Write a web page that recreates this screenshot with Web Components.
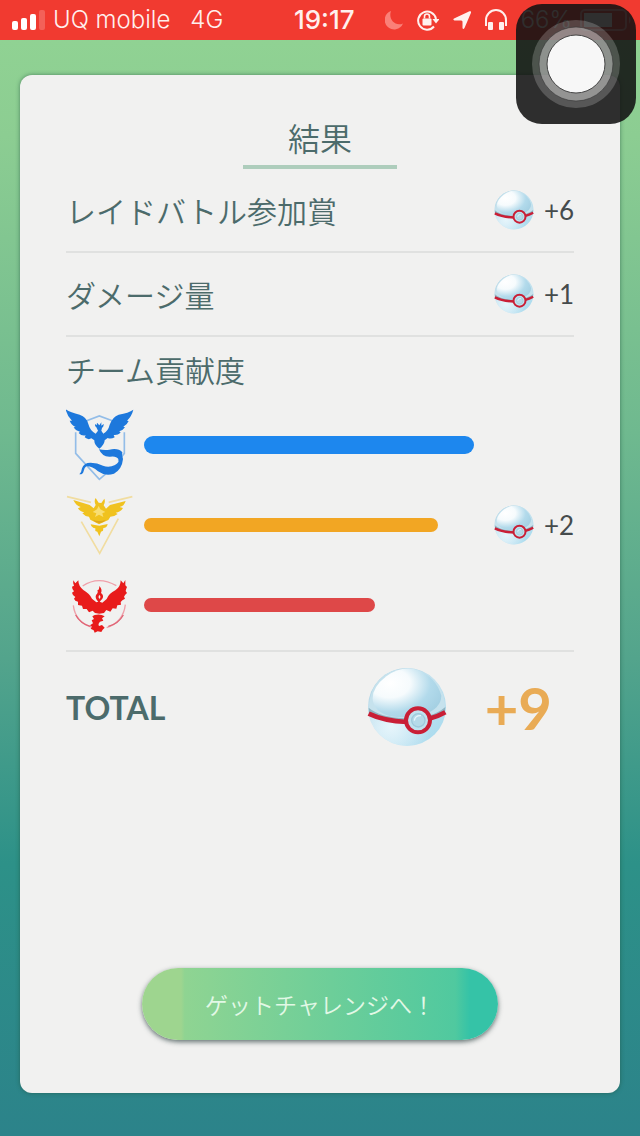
<!DOCTYPE html>
<html lang="ja">
<head>
<meta charset="utf-8">
<meta name="viewport" content="width=device-width, initial-scale=1">
<title>結果</title>
<style>
    body {
        margin: 0;
        font-family: Lato, "Noto Sans CJK JP", sans-serif;
        color: #4c6b6b;
    }
</style>
</head>
<body>
<raid-app></raid-app>

<template id="status-bar">
    <style>
        :host {
            display: flex;
            align-items: center;
            box-sizing: border-box;
            height: 40px;
            padding: 0 8px 0 12px;
            background: #f13a30;
            color: #fff0ee;
            font: 300 24px/40px Inter, "Liberation Sans", sans-serif;
        }
        svg { display: block; flex: none; }
        .carrier { margin-left: 8px; }
        .network { margin-left: 20px; }
        .time { margin-left: auto; font-size: 26px; font-weight: 500; }
        .icons { display: flex; align-items: center; gap: 14px; margin-left: 30px; }
        .power { display: flex; align-items: center; gap: 8px; }
    </style>
    <svg width="33" height="20" viewBox="0 0 33 20" fill="#fff">
        <rect y="11" width="6" height="9" rx="2"/>
        <rect x="9" y="8" width="6" height="12" rx="2"/>
        <rect x="18" y="4" width="6" height="16" rx="2"/>
        <rect x="27" width="6" height="20" rx="2" opacity=".2"/>
    </svg>
    <span class="carrier">UQ mobile</span>
    <span class="network">4G</span>
    <span class="time">19:17</span>
    <div class="icons">
        <svg width="18" height="20" viewBox="0 0 18 20"><path d="M6 1A9.500 9.500 0 1 0 18 13.500C10 17 3 9 6 1Z" fill="#fa8078"/></svg>
        <svg width="22" height="22" viewBox="0 0 22 22">
            <path d="M17 17.500A9 9 0 1 1 19 10" fill="none" stroke="#fff0ee" stroke-width="2"/>
            <path d="M15.500 10H22.500L19 14.500Z" fill="#fff0ee"/>
            <rect x="5.500" y="9.500" width="9" height="7" rx="1" fill="#fff0ee"/>
            <path d="M7.500 9.500V7.500A2.500 2.500 0 0 1 12.500 7.500V9.500" fill="none" stroke="#fff0ee" stroke-width="1.600"/>
        </svg>
        <svg width="18" height="20" viewBox="0 0 18 20"><path d="M16.500 1.200Q18.500.8 18 2.800L11.500 18Q10.200 19.800 9.500 18V11.500Q9 10.500 8 10.500H1.500Q-.5 9.800 1 8.500Z" fill="#fff0ee"/></svg>
        <svg width="22" height="22" viewBox="0 0 22 22" fill="#fff0ee">
            <path d="M1 17V11A10 10 0 0 1 21 11V17" fill="none" stroke="#fff0ee" stroke-width="2"/>
            <rect x="3" y="13" width="5" height="8" rx="1"/>
            <rect x="14" y="13" width="5" height="8" rx="1"/>
        </svg>
        <div class="power">
            <span>66%</span>
            <svg width="52" height="22" viewBox="0 0 52 22">
                <rect x="1" y="1" width="45" height="20" rx="4" fill="none" stroke="#fff" stroke-width="2" opacity=".5"/>
                <rect x="4" y="4" width="28" height="14" fill="#fff"/>
                <path d="M49 7Q52 11 49 15Z" fill="#fff" opacity=".5"/>
            </svg>
        </div>
    </div>
</template>

<template id="premier-ball">
    <style>
        :host { display: block; width: 40px; flex: none; }
        svg { display: block; width: 100%; }
    </style>
    <svg viewBox="0 0 240 240">
        <defs>
            <linearGradient id="base" x1="0" y1="0" x2="1" y2="1">
                <stop offset="0" stop-color="#a9cfe0"/>
                <stop offset=".5" stop-color="#c3e3f1"/>
                <stop offset="1" stop-color="#a4d9ed"/>
            </linearGradient>
            <radialGradient id="dome" cx=".25" cy=".3" r=".85">
                <stop offset="0" stop-color="#fff"/>
                <stop offset=".35" stop-color="#f6fbfd"/>
                <stop offset=".7" stop-color="#b2daeb"/>
                <stop offset="1" stop-color="#a3cfe2"/>
            </radialGradient>
            <radialGradient id="glow" cx=".3" cy=".75" r=".5">
                <stop offset="0" stop-color="#e6f5fb"/>
                <stop offset="1" stop-color="#e6f5fb" stop-opacity="0"/>
            </radialGradient>
        </defs>
        <circle cx="120" cy="120" r="117" fill="url(#base)"/>
        <circle cx="120" cy="120" r="117" fill="url(#glow)"/>
        <path d="M6 132Q50 160 114 162Q190 162 234 134Q238 64 184 24Q120-16 56 22Q4 58 6 132Z" fill="#c6e2ed"/>
        <path d="M5 122Q40 152 118 154Q196 154 235 120L233 142Q190 164 118 164Q46 160 6 140Z" fill="#8fb4c2"/>
        <path d="M17 96Q20 134 70 148Q120 156 172 142Q222 124 223 86Q208 30 150 8Q100-4 58 28Q16 60 17 96Z" fill="url(#dome)"/>
        <path d="M5 140Q50 162 120 165Q190 162 235 136" fill="none" stroke="#c91f36" stroke-width="14"/>
        <circle cx="153" cy="160" r="36" fill="#bfe3ef" stroke="#c91f36" stroke-width="12"/>
        <circle cx="154" cy="160" r="20" fill="#b5dbe9" stroke="#9fcadb" stroke-width="4"/>
        <path d="M142 161Q144 145 162 146" fill="none" stroke="#e7f7fc" stroke-width="4"/>
    </svg>
</template>

<template id="result-row">
    <style>
        :host {
            display: flex;
            align-items: center;
            justify-content: space-between;
            box-sizing: border-box;
            height: 84px;
            border-bottom: 2px solid #e0e1e0;
            font-size: 30px;
        }
    </style>
    <slot></slot>
    <slot name="reward"></slot>
</template>

<template id="ball-reward">
    <style>
        :host {
            display: flex;
            align-items: center;
            gap: 10px;
            width: 80px;
            color: #454b4c;
            font-size: 26px;
        }
        :host([large]) {
            gap: 38px;
            width: auto;
            padding-right: 22px;
            color: #e9ab55;
            font-size: 58px;
            font-weight: 700;
        }
        :host([large]) premier-ball { width: 80px; }
    </style>
    <premier-ball></premier-ball>
    <span><slot></slot></span>
</template>

<template id="team-bar">
    <style>
        :host {
            display: grid;
            grid-template-columns: 68px 1fr 80px;
            column-gap: 10px;
            align-items: center;
            height: 80px;
        }
        svg { display: none; width: 68px; height: 72px; }
        :host([team="mystic"]) .mystic,
        :host([team="instinct"]) .instinct,
        :host([team="valor"]) .valor { display: block; }
        .track { margin-right: 10px; }
        .fill {
            width: var(--score);
            height: 14px;
            border-radius: 9px;
            background: #f2a623;
        }
        :host([team="mystic"]) .fill { height: 18px; background: #1d87ee; }
        :host([team="valor"]) .fill { background: #de4848; }
    </style>
    <div class="emblem">
        <svg class="mystic" viewBox="33 27 204 216" fill="#1d78dc">
            <path d="M85 66 133 48 182 66M62 97V160L133 238 178 200M208 97V160L190 182" fill="none" stroke="#93bde8" stroke-width="5"/>
            <path d="M32 28Q45 38 74 44Q95 51 100 72Q105 92 122 101L129 92 124 82Q119 79 120 72L125 76 126 68 133 76 139 67 139 77 146 72Q147 79 141 84L139 92 145 101Q160 92 164 74Q172 51 191 44Q221 39 235 29Q230 49 216 62L221 63Q216 75 205 80L210 82Q203 92 193 94L197 98Q187 107 176 105L179 112Q168 118 158 114L149 121Q149 134 133 146Q117 134 118 121L109 115Q100 121 89 112L92 106Q80 109 71 99L75 95Q63 93 56 82L62 81Q49 75 44 62L51 62Q36 48 32 28Z"/>
            <path d="M132 148Q150 152 163 149Q190 143 202 157Q199 165 204 177Q201 208 177 221Q151 230 129 214Q111 198 94 199Q87 204 86 213Q84 224 73 223Q80 216 81 205Q86 188 107 188Q127 188 144 197Q162 204 180 195Q195 186 190 177Q184 167 165 170Q141 171 132 148Z"/>
        </svg>
        <svg class="instinct" viewBox="33 9 204 216" fill="#f0c21f">
            <path d="M79 107 134 202 190 98M36 32 108 49M232 32 161 49" fill="none" stroke="#f1dda0" stroke-width="5"/>
            <path d="M55 42 104 57 116 67 122 57Q116 45 122 36L131 50 139 51 148 38Q152 48 146 58L153 68 165 57 212 45Q207 61 194 63L204 66Q196 79 182 80L188 84Q178 92 166 92L160 102 145 109 132 115 119 108 106 101 102 92Q89 91 82 82L88 79Q74 76 69 67L77 63Q62 58 55 42Z"/>
            <path d="M107 115 133 119 158 114Q156 126 145 126L144 134 138 137 133 151 127 137 121 135 121 127Q110 126 107 115Z"/>
            <path d="M113 78 126 70 131 60 136 70 151 78 142 82 145 93 132 86 120 93 124 82Z" fill="#f8de73"/>
            <path d="M113 101Q132 109 153 101L145 108 133 112 121 108Z" fill="#dda51d"/>
        </svg>
        <svg class="valor" viewBox="33 9 204 216" fill="#e81b1b">
            <path d="M83 60Q130 28 184 59M55 118Q61 168 111 184M211 116Q205 168 155 185" fill="none" stroke="#efa0aa" stroke-width="4"/>
            <path d="M62 147Q77 174 106 181M205 147Q190 174 160 181" fill="none" stroke="#df6475" stroke-width="4"/>
            <path d="M55 43 61 52 70 43Q70 60 85 72Q104 83 111 98L124 109 130 107Q119 97 123 87Q131 80 127 73Q133 73 133 60Q143 71 138 81Q148 89 142 98L134 107 142 110 155 99Q162 82 181 73Q197 63 197 43L205 52 211 42 211 58 216 63Q213 69 212 75L216 81Q210 86 207 92L210 98Q201 102 197 108L198 116 187 118 184 128 173 127 166 137 154 132 147 141 133 143 120 141 113 134 102 139 95 129 84 129 81 119 69 117 69 107Q59 105 57 98L61 93Q52 87 51 80L57 76Q51 69 51 62L57 59Q53 52 55 43Z"/>
            <path d="M119 147Q136 142 149 151L141 157 145 164 135 167Q128 174 132 180L141 177 149 185 143 191 139 198 128 196 119 200 116 193 107 188 111 182 105 178 114 172 110 163 117 159 112 151Z"/>
            <path d="M133 87Q139 92 134 99Q128 94 133 87Z" fill="#f1f1f0"/>
        </svg>
    </div>
    <div class="track"><div class="fill"></div></div>
    <slot></slot>
</template>

<template id="assistive-touch">
    <style>
        :host { position: fixed; top: 4px; right: 4px; }
        button {
            display: block;
            width: 120px;
            height: 120px;
            padding: 0;
            border: 0;
            border-radius: 26px;
            background: rgba(18, 18, 18, .88);
        }
        svg { display: block; }
    </style>
    <button type="button" aria-label="AssistiveTouch">
        <svg width="120" height="120" viewBox="0 0 120 120">
            <circle cx="60" cy="60" r="44" fill="#fff" opacity=".2"/>
            <circle cx="60" cy="60" r="37" fill="#fff" fill-opacity=".36" stroke="#333" stroke-opacity=".6"/>
            <circle cx="60" cy="60" r="29" fill="#f7f7f7" stroke="#444"/>
        </svg>
    </button>
</template>

<template id="raid-app">
    <style>
        :host {
            display: flex;
            flex-direction: column;
            min-height: 100vh;
            background: linear-gradient(#90d293 40px, #8ccd92 12%, #6fb98f 38%, #53a48c 58%, #2d9188 76%, #2c838a 100%);
        }
        main {
            flex: 1;
            display: flex;
            flex-direction: column;
            margin: 35px 20px 43px;
            padding: 38px 46px 53px;
            border-radius: 12px;
            background: #f1f1f0;
            box-shadow: 0 0 4px rgba(30, 80, 60, .6);
        }
        h1 {
            align-self: center;
            margin: 0;
            padding: 0 45px;
            border-bottom: 4px solid #aecdbc;
            font-size: 32px;
            font-weight: 350;
            line-height: 52px;
        }
        h2 { margin: 0; font-size: 30px; font-weight: 350; line-height: 66px; padding-bottom: 2px; }
        .label { font-weight: 350; }
        .teams { padding-bottom: 5px; border-bottom: 2px solid #e0e1e0; }
        .total {
            display: flex;
            align-items: center;
            justify-content: space-between;
            height: 110px;
        }
        .total strong { font-size: 32px; }
        .next {
            align-self: center;
            width: 70%;
            height: 72px;
            margin-top: auto;
            border: 0;
            border-radius: 36px;
            background: linear-gradient(90deg, #9ed58f 11%, #8fd492 12%, #50c99f 88%, #35c3a7 92%);
            box-shadow: 0 2px 5px rgba(40, 60, 60, .7);
            color: #e2f8e6;
            font-family: inherit;
            font-size: 23px;
            font-weight: 350;
        }
    </style>
    <status-bar></status-bar>
    <main>
        <h1>結果</h1>
        <result-row><span class="label">レイドバトル参加賞</span><ball-reward slot="reward">+6</ball-reward></result-row>
        <result-row><span class="label">ダメージ量</span><ball-reward slot="reward">+1</ball-reward></result-row>
        <section class="teams">
            <h2>チーム貢献度</h2>
            <team-bar team="mystic" score="100"></team-bar>
            <team-bar team="instinct" score="89"><ball-reward>+2</ball-reward></team-bar>
            <team-bar team="valor" score="70"></team-bar>
        </section>
        <div class="total"><strong>TOTAL</strong><ball-reward large>+9</ball-reward></div>
        <button class="next" type="button">ゲットチャレンジへ！</button>
    </main>
    <assistive-touch></assistive-touch>
</template>

<script>
class TemplateElement extends HTMLElement {
    constructor() {
        super();

        const template = document.getElementById(this.localName);
        this._shadowRoot = this.attachShadow({ mode: 'open' });
        this._shadowRoot.appendChild(template.content.cloneNode(true));
    }
}

class StatusBar extends TemplateElement {}
class PremierBall extends TemplateElement {}
class ResultRow extends TemplateElement {}
class BallReward extends TemplateElement {}
class AssistiveTouch extends TemplateElement {}
class RaidApp extends TemplateElement {}

class TeamBar extends TemplateElement {
    connectedCallback() {
        this.$fill = this.shadowRoot.querySelector('.fill');
        this.$fill.style.setProperty('--score', `${this.getAttribute('score')}%`);
    }
}

customElements.define('status-bar', StatusBar);
customElements.define('premier-ball', PremierBall);
customElements.define('result-row', ResultRow);
customElements.define('ball-reward', BallReward);
customElements.define('team-bar', TeamBar);
customElements.define('assistive-touch', AssistiveTouch);
customElements.define('raid-app', RaidApp);
</script>
</body>
</html>
